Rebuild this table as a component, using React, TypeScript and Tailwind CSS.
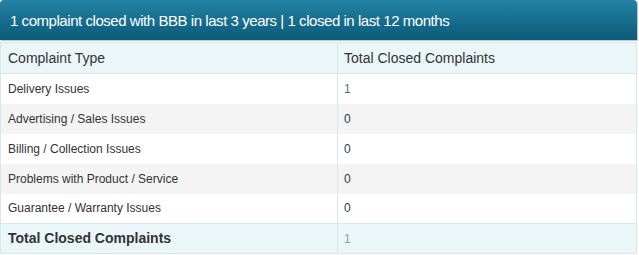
import React from 'react';

const ROWS = [
  { type: 'Delivery Issues', count: 1 },
  { type: 'Advertising / Sales Issues', count: 0 },
  { type: 'Billing / Collection Issues', count: 0 },
  { type: 'Problems with Product / Service', count: 0 },
  { type: 'Guarantee / Warranty Issues', count: 0 },
];

const App: React.FC = () => {
  return (
    <div className="w-[639px] h-[255px] bg-white font-['Liberation_Sans',Arial,sans-serif]">
      <div className="w-[637px] h-[40px] rounded-t-[4px] bg-gradient-to-b from-[#2383a5] to-[#0b5a78] flex items-center px-[10px] pt-[3px] text-white text-[15px] tracking-[-0.45px] shadow-[1px_1px_1px_rgba(0,0,0,0.25)]">
        1 complaint closed with BBB in last 3 years | 1 closed in last 12 months
      </div>
      <table className="mt-[2px] w-[637px] border-collapse border border-[#d5e8ee] text-[#333]">
        <thead>
          <tr className="h-[31px] bg-[#ebf6f9] text-[14px]">
            <th className="w-[337px] text-left font-normal px-[7px] border border-[#d5e8ee]">Complaint Type</th>
            <th className="text-left font-normal px-[6px] border border-[#d5e8ee]">Total Closed Complaints</th>
          </tr>
        </thead>
        <tbody className="text-[12px]">
          {ROWS.map((row, i) => (
            <tr key={row.type} className={`h-[30px] ${i % 2 === 1 ? 'bg-[#f4f4f4]' : 'bg-white'}`}>
              <td className="px-[7px] border-x border-[#d5e8ee]">{row.type}</td>
              <td className={`px-[6px] border-x border-[#d5e8ee] ${row.count ? 'text-[#5a6f8a]' : 'text-[#2e3d52]'}`}>{row.count}</td>
            </tr>
          ))}
          <tr className="h-[30px] bg-[#ebf6f9] border-t border-[#d5e8ee]">
            <td className="px-[7px] border border-[#d5e8ee] text-[14px] font-bold">Total Closed Complaints</td>
            <td className="px-[6px] border border-[#d5e8ee] text-[#999]">1</td>
          </tr>
        </tbody>
      </table>
    </div>
  );
};

export default App;
